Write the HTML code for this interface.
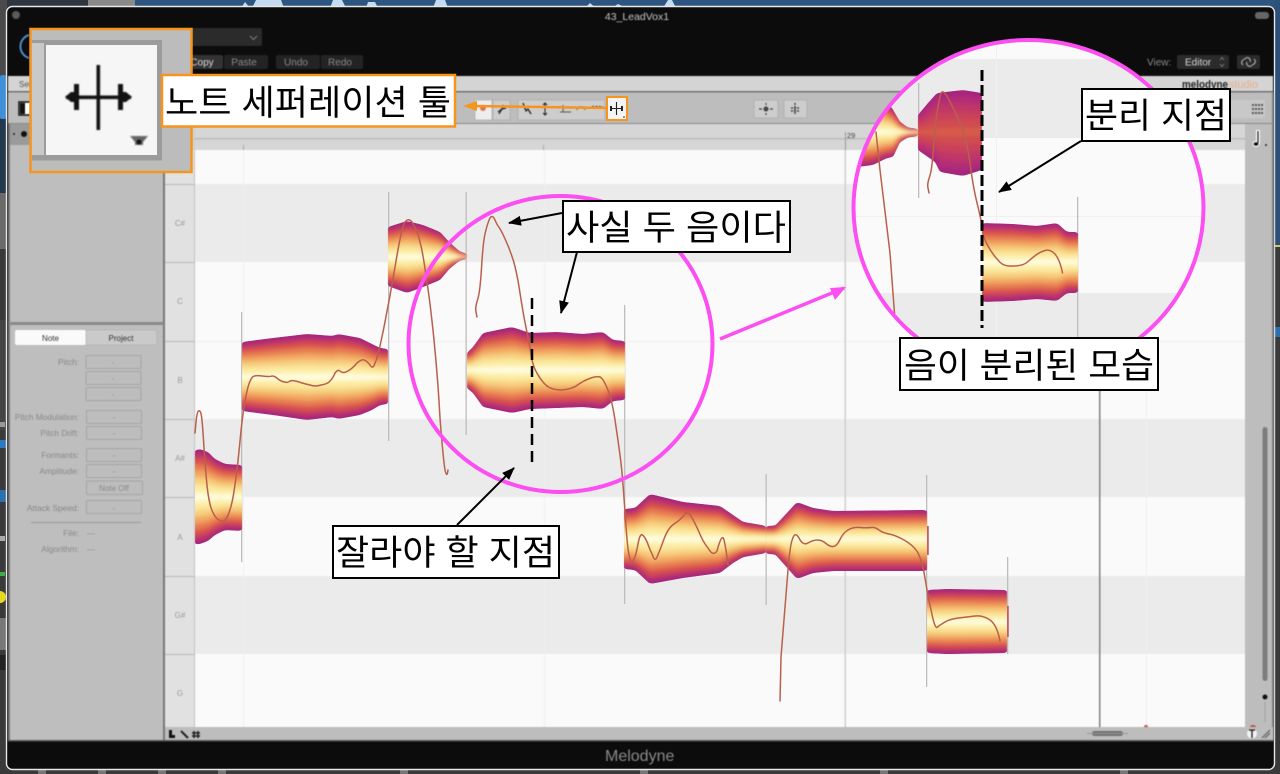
<!DOCTYPE html>
<html lang="ko"><head><meta charset="utf-8"><title>Melodyne</title>
<style>
html,body{margin:0;padding:0;background:#333;width:1280px;height:774px;overflow:hidden}
svg{display:block}
text{font-family:"Liberation Sans","Noto Sans CJK KR",sans-serif}
.k{font-size:35px;fill:#000}
.l{font-size:8.4px;fill:#888;text-anchor:end}
.f{fill:#bdbdbd;stroke:#a5a5a5;stroke-width:1}
.fd{font-size:8px;fill:#8a8a8a;text-anchor:middle}
.pc{fill:none;stroke:#b9604c;stroke-width:1.5;stroke-linejoin:round;stroke-linecap:round}
.btn{font-size:10px;fill:#8a8a8a;text-anchor:middle}
.key{font-size:8px;fill:#999;text-anchor:middle}
.tb{fill:#cdcdcd;stroke:#aaa;stroke-width:.7}
</style></head><body>
<svg width="1280" height="774" viewBox="0 0 1280 774" xmlns="http://www.w3.org/2000/svg">
<defs>
<filter id="by" x="-2%" y="-10%" width="104%" height="120%" color-interpolation-filters="sRGB"><feGaussianBlur stdDeviation="0 1.6"/></filter>
<filter id="sm" x="-6%" y="-15%" width="112%" height="130%" color-interpolation-filters="sRGB"><feGaussianBlur stdDeviation="2.5 1.1"/><feComponentTransfer><feFuncA type="linear" slope="7" intercept="-3"/></feComponentTransfer></filter>
<filter id="soft" x="-5%" y="-5%" width="110%" height="110%" color-interpolation-filters="sRGB"><feGaussianBlur stdDeviation=".45"/></filter>
<filter id="soft2" x="-10%" y="-10%" width="120%" height="120%" color-interpolation-filters="sRGB"><feGaussianBlur stdDeviation=".8"/></filter>
<clipPath id="cc"><ellipse cx="1028.5" cy="208" rx="175" ry="168"/></clipPath>
<marker id="ah" markerWidth="14" markerHeight="12" refX="12" refY="5" orient="auto" markerUnits="userSpaceOnUse"><path d="M0 0L13 5L0 10Z" fill="#000"/></marker>
<path id="b1" d="M195-47L200-48 208-45 215-38 225-33 242-32V34L225 33 215 38 208 44 200 47 195 48Z"/>
<path id="b2" d="M242-35L273-39 307-43 333-41 338-43 360-39 372-33 380-29 388-28V27L380 28 372 33 360 38 338 42 333 40 307 43 273 38 242 34Z"/>
<path id="b3" d="M388-30L407-36 423-32 440-25 450-14 460-5 467-3V2L460 3 450 11 440 23 423 30 407 36 388 29Z"/>
<path id="b4" d="M467-17L473-23 483-37 512-43 530-37 557-38 583-36 603-38 613-30 625-29V30L613 31 603 39 583 37 557 38 530 39 512 43 483 37 473 23 467 18Z"/>
<path id="b5" d="M624-30L635-31 650-45 683-37 720-33 733-24 743-17 766-13V14L743 18 733 24 720 34 683 39 650 45 635 31 624 30Z"/>
<path id="b6" d="M766-13L775-13 797-37 813-31 833-28 927-29V32L833 32 813 34 797 40 775 15 766 15Z"/>
<path id="b7" d="M927-32L947-33 1007-32V31L947 32 927 31Z"/>
<path id="b8" d="M857-35L873-35 885-30 892-24 900-10 908-4 918-3V4L908 5 900 10 893 25 887 26 873 33 857 35Z"/>
<path id="b9" d="M918-17L928-29 937-39 963-42 982-39V38L963 44 940 40 935 30 918 18Z"/>
<path id="b10" d="M982-39L1013-38 1037-36 1057-39 1067-30 1078-30V31L1067 31 1057 39 1037 37 1013 39 982 40Z"/>
</defs>

<!-- desktop behind -->
<rect width="1280" height="774" fill="#3a3a3a"/>
<rect x="135" width="1145" height="8" fill="#2e5580"/>
<rect x="1275" width="5" height="245" fill="#2c5078"/>
<rect x="88" width="47" height="8" fill="#8a8a8a"/>
<rect width="88" height="8" fill="#2f3640"/>
<path d="M241 8L245 2 250 8ZM252 8L256 0 281 0 284 8ZM330 8L333 0 342 0 346 8ZM366 8L368 2 375 2 378 8ZM433 8L436 0 445 0 448 8ZM585 8L590 3 596 8ZM612 8L618 4 626 8ZM663 8L668 0 672 0 676 8Z" fill="#c3dbf0"/>
<rect y="0" width="7" height="75" fill="#4a4a4a"/>
<rect y="75" width="6" height="44" fill="#3f90d8" rx="2"/>
<rect y="119" width="7" height="74" fill="#24384e"/>
<rect y="193" width="7" height="56" fill="#6a6a6a"/>
<rect y="320" width="6" height="110" fill="#444"/>
<rect y="422" width="5" height="5" fill="#999"/>
<rect y="440" width="6" height="8" fill="#2d7ac0"/>
<rect y="490" width="6" height="12" fill="#2d70b0"/>
<rect y="536" width="5" height="5" fill="#aaa"/>
<rect y="572" width="5" height="4" fill="#3fae4a"/>
<circle cx="0" cy="597" r="6" fill="#e8d820"/>
<rect y="618" width="6" height="32" fill="#777"/>
<rect y="655" width="6" height="15" fill="#222"/>
<g fill="#777"><rect x="38" y="770" width="8" height="4"/><rect x="98" y="770" width="8" height="4"/><rect x="158" y="770" width="8" height="4"/><rect x="218" y="770" width="8" height="4"/><rect x="400" y="770" width="8" height="4"/><rect x="640" y="770" width="8" height="4"/><rect x="880" y="770" width="8" height="4"/><rect x="1120" y="770" width="8" height="4"/></g>
<rect x="1275" y="327" width="5" height="10" fill="#2d70b0"/>
<rect x="1275" y="245" width="5" height="2" fill="#d8c860"/>

<!-- window -->
<rect x="6.5" y="6.5" width="1268" height="763" rx="6" fill="#0c0c0c" stroke="#e8e8e8" stroke-width="1.4"/>
<g filter="url(#soft)">
<circle cx="16" cy="15" r="4" fill="#5a5a5a"/>
<rect x="1255" y="12" width="14" height="7" rx="3" fill="#666"/>
<text x="637" y="20" font-size="10.5" fill="#c6c6c6" text-anchor="middle">43_LeadVox1</text>
<path d="M29 35A12 12 0 0 0 29 58" fill="none" stroke="#4a90d0" stroke-width="2"/>
<rect x="190" y="28" width="72" height="18" rx="2" fill="#2b2b2b"/>
<path d="M250 36l3.5 3.5 3.5-3.5" fill="none" stroke="#777" stroke-width="1.2"/>
<rect x="190" y="55" width="33" height="14" rx="2" fill="#333"/>
<rect x="224" y="55" width="44" height="14" rx="2" fill="#232323"/>
<rect x="276" y="55" width="44" height="14" rx="2" fill="#232323"/>
<rect x="321" y="55" width="42" height="14" rx="2" fill="#232323"/>
<text class="btn" x="202" y="65.5" style="fill:#ddd">Copy</text>
<text class="btn" x="244" y="65.5">Paste</text>
<text class="btn" x="296" y="65.5">Undo</text>
<text class="btn" x="340" y="65.5">Redo</text>
<text x="1147" y="65.5" font-size="10" fill="#8a8a8a">View:</text>
<rect x="1177" y="55" width="52" height="14" rx="2" fill="#2b2b2b"/>
<text x="1185" y="65.5" font-size="10" fill="#d8d8d8">Editor</text>
<path d="M1220 60l2-2.5 2 2.5M1220 64l2 2.5 2-2.5" fill="none" stroke="#888" stroke-width=".8"/>
<rect x="1237" y="55" width="23" height="14" rx="2" fill="#2b2b2b"/>
<path d="M1243 65a3 3 0 0 1 0-5l3-2a3 3 0 0 1 4 4M1254 59a3 3 0 0 1 0 5l-3 2a3 3 0 0 1-4-4" fill="none" stroke="#bbb" stroke-width="1"/>

<!-- strip -->
<rect x="8" y="76" width="1265" height="16" fill="#d4d4d4"/>
<text x="19" y="87" font-size="8" fill="#555">Set</text>
<text x="1182" y="88" font-size="11" font-weight="bold" fill="#222" textLength="46" lengthAdjust="spacingAndGlyphs">melodyne</text>
<text x="1229" y="88" font-size="11" fill="#eab08a" textLength="29" lengthAdjust="spacingAndGlyphs">studio</text>

<!-- toolbar -->
<rect x="8" y="91" width="1265" height="33" fill="#bdbdbd"/>
<rect x="8" y="91" width="1265" height="1.5" fill="#707070"/>
<rect x="8" y="123" width="1265" height="1.5" fill="#8a8a8a"/>
<rect x="19" y="102" width="12" height="13" fill="#fff" stroke="#111" stroke-width="1.5"/>
<rect x="20" y="103" width="5" height="11" fill="#111"/>
<rect x="475" y="100" width="17" height="20" fill="#eee" stroke="#aaa" stroke-width=".7"/>
<rect x="493" y="100" width="17" height="20" class="tb"/>
<circle cx="483" cy="108" r="3" fill="#d87850"/>
<path d="M498 112l4-3 1-4M499 114l3-5 4-1" stroke="#222" stroke-width="1.2" fill="none"/>
<rect x="518" y="100" width="87" height="20" class="tb"/>
<path d="M523 103l3 8 2-2 3 5" stroke="#222" stroke-width="1.3" fill="none"/>
<path d="M545 103v12M543 105l2-2 2 2M543 113l2 2 2-2" stroke="#222" stroke-width="1" fill="none"/>
<path d="M560 112h11M563 105v7" stroke="#555" stroke-width="1" fill="none"/>
<path d="M577 110a4 3 0 0 1 8 0" stroke="#555" stroke-width="1" fill="none"/>
<path d="M592 107h11" stroke="#333" stroke-width="2" stroke-dasharray="2 1.5"/>
<rect x="754" y="100" width="24" height="18" rx="1" class="tb"/>
<rect x="784" y="100" width="23" height="18" rx="1" class="tb"/>
<circle cx="766" cy="109" r="2.5" fill="#444"/>
<path d="M759 109h3M770 109h3M766 103v2M766 113v2" stroke="#444" stroke-width="1.2"/>
<path d="M795 103v12M791 108l8 0M791 111l8 0" stroke="#444" stroke-width="1.5" stroke-dasharray="2 1"/>
<rect x="1195" y="100" width="70" height="18" rx="1" fill="#c8c8c8"/>
<path d="M1252 105h11M1252 109h11M1252 113h11" stroke="#555" stroke-width="2" stroke-dasharray="2 1"/>

<!-- left panel -->
<rect x="9" y="124" width="155" height="617" fill="#bebebe"/>
<rect x="9" y="124" width="155" height="21" fill="#b0b0b0"/>
<rect x="9" y="124" width="21" height="21" fill="#9a9a9a"/>
<circle cx="24" cy="134" r="3" fill="#111"/><circle cx="14" cy="134" r="1" fill="#222"/>
<rect x="8" y="124" width="2" height="617" fill="#777"/>
<rect x="163" y="124" width="2" height="617" fill="#777"/>
<rect x="9" y="322" width="155" height="3" fill="#8a8a8a"/>
<rect x="15" y="330" width="71" height="15" rx="2" fill="#fafafa"/>
<rect x="86" y="330" width="71" height="15" rx="2" fill="#cacaca" stroke="#aaa" stroke-width=".6"/>
<text x="50.5" y="341" font-size="8" fill="#333" text-anchor="middle">Note</text>
<text x="121" y="341" font-size="8" fill="#333" text-anchor="middle">Project</text>

<text class="l" x="79" y="365">Pitch:</text>
<rect class="f" x="86" y="355.5" width="55" height="13" rx="1"/><text class="fd" x="113" y="365">-</text>
<rect class="f" x="86" y="371.5" width="55" height="13" rx="1"/><text class="fd" x="113" y="381">-</text>
<rect class="f" x="86" y="387.5" width="55" height="13" rx="1"/><text class="fd" x="113" y="397">-</text>
<text class="l" x="79" y="420">Pitch Modulation:</text>
<rect class="f" x="86.5" y="410.5" width="55" height="13" rx="1"/><text class="fd" x="114" y="420">-</text>
<text class="l" x="79" y="436">Pitch Drift:</text>
<rect class="f" x="86.5" y="426.5" width="55" height="13" rx="1"/><text class="fd" x="114" y="436">-</text>
<text class="l" x="79" y="458">Formants:</text>
<rect class="f" x="86.5" y="448.5" width="55" height="13" rx="1"/><text class="fd" x="114" y="458">-</text>
<text class="l" x="79" y="474">Amplitude:</text>
<rect class="f" x="86.5" y="464.5" width="55" height="13" rx="1"/><text class="fd" x="114" y="474">-</text>
<rect class="f" x="86.5" y="481" width="56" height="13.5" rx="1"/><text class="fd" x="114" y="491">Note Off</text>
<text class="l" x="79" y="511">Attack Speed:</text>
<rect class="f" x="86.5" y="500.5" width="55" height="13" rx="1"/><text class="fd" x="114" y="511">-</text>
<rect x="31" y="522" width="110" height="1" fill="#999"/>
<text class="l" x="79" y="536">File:</text><text x="87" y="536" font-size="8" fill="#8a8a8a">---</text>
<text class="l" x="79" y="552">Algorithm:</text><text x="87" y="552" font-size="8" fill="#8a8a8a">---</text>

<!-- ruler -->
<rect x="165" y="124" width="1082" height="26" fill="#d6d6d6"/>
<rect x="195" y="138" width="1050" height="1.5" fill="#bcbcbc"/>
<rect x="165" y="124" width="30" height="26" fill="#cfcfcf"/>
<text x="847" y="138" font-size="7.5" fill="#444">29</text>
<rect x="243" y="145" width="1" height="5" fill="#aaa"/>
<rect x="543" y="145" width="1" height="5" fill="#aaa"/>
<rect x="845" y="132" width="1" height="18" fill="#999"/>

<!-- keys -->
<rect x="165" y="150" width="30" height="577" fill="#e1e1e1"/>
<g fill="#b8b8b8"><rect x="165" y="184" width="30" height="1"/><rect x="165" y="262" width="30" height="1"/><rect x="165" y="341" width="30" height="1"/><rect x="165" y="419" width="30" height="1"/><rect x="165" y="497" width="30" height="1"/><rect x="165" y="576" width="30" height="1"/><rect x="165" y="654" width="30" height="1"/></g>
<rect x="194" y="150" width="1.5" height="577" fill="#c2c2c2"/>
<text class="key" x="180" y="226">C#</text><text class="key" x="180" y="304">C</text><text class="key" x="180" y="383">B</text><text class="key" x="180" y="461">A#</text><text class="key" x="180" y="540">A</text><text class="key" x="180" y="618">G#</text><text class="key" x="180" y="696">G</text>

<!-- grid -->
<rect x="195" y="150" width="1050" height="577" fill="#fafafa"/>
<g fill="#ebebeb"><rect x="195" y="184" width="1050" height="78"/><rect x="195" y="419" width="1050" height="78"/><rect x="195" y="576" width="1050" height="78"/></g>
<rect x="195" y="341" width="1050" height="1" fill="#efefef"/>
<g fill="#efefef"><rect x="243" y="150" width="1" height="577"/><rect x="544" y="150" width="1" height="577"/><rect x="1146" y="150" width="1" height="577"/></g>
<rect x="844.5" y="150" width="1.5" height="577" fill="#cfcfcf"/>
<rect x="1099" y="390" width="1.5" height="337" fill="#808080"/>

<!-- right scroll -->
<rect x="1245" y="124" width="28" height="617" fill="#bdbdbd"/>
<rect x="1272" y="92" width="2" height="649" fill="#808080"/>
<rect x="1262.5" y="427" width="5" height="254" rx="2.5" fill="#7d7d7d"/>
<circle cx="1265" cy="697" r="2.5" fill="#111"/>
<rect x="1264.5" y="702" width="1" height="20" fill="#a0a0a0"/>
<path d="M1258 130v14" stroke="#fff" stroke-width="4"/>
<ellipse cx="1256" cy="144" rx="3.5" ry="3" fill="#fff"/>
<path d="M1258 131v12" stroke="#111" stroke-width="1.2"/><ellipse cx="1256" cy="144" rx="2.4" ry="1.8" fill="#111"/>
<circle cx="1266" cy="145" r="1" fill="#222"/>

<!-- bottom bar -->
<rect x="165" y="727" width="1108" height="14" fill="#bdbdbd"/>
<rect x="8" y="740" width="1265" height="1.5" fill="#555"/>
<path d="M169 730h3v5h3v3h-6Z" fill="#111"/>
<path d="M181 731l7 7" stroke="#222" stroke-width="2"/>
<path d="M194 731v7M198 731v7M192 733h8M192 736h8" stroke="#222" stroke-width="1.6"/>
<rect x="1092" y="731" width="31" height="5" rx="2.5" fill="#707070"/>
<rect x="1087" y="733" width="41" height="1" fill="#999"/>
<circle cx="1252" cy="733.5" r="5" fill="#f5f5f5"/>
<path d="M1249 730h6M1252 730v8" stroke="#222" stroke-width="1.4"/>
<path d="M1262 738l8-8M1265 738l5-5" stroke="#555" stroke-width="1"/>
<path d="M1144 727a2 2 0 0 1 4 0ZM1250 727a3 2 0 0 1 6 0Z" fill="#c05040"/>
<text x="605" y="761" font-size="16" fill="#8c8c8c">Melodyne</text>
</g>

<!-- note bars -->
<g fill="#bdbdbd">
<rect x="241" y="312" width="1.3" height="250"/><rect x="388" y="192" width="1.3" height="249"/><rect x="465.5" y="192" width="1.3" height="243"/>
<rect x="624" y="305" width="1.3" height="299"/><rect x="765.5" y="474" width="1.3" height="131"/><rect x="926" y="475" width="1.3" height="212"/><rect x="1007" y="557" width="1.3" height="97"/></g>

<!-- blobs -->
<g transform="translate(0,497)"><g filter="url(#sm)"><use href="#b1" fill="#a5267f"/><g filter="url(#by)"><use href="#b1" transform="scale(1,.92)" fill="#c13868"/><use href="#b1" transform="scale(1,.82)" fill="#d6504f"/><use href="#b1" transform="scale(1,.7)" fill="#e77b50"/><use href="#b1" transform="scale(1,.56)" fill="#f1a862"/><use href="#b1" transform="scale(1,.42)" fill="#f7ce7f"/><use href="#b1" transform="scale(1,.28)" fill="#fbe89d"/><use href="#b1" transform="scale(1,.14)" fill="#fdf5bd"/><use href="#b1" transform="scale(1,.04)" fill="#fffef0"/></g></g></g>
<g transform="translate(0,377)"><g filter="url(#sm)"><use href="#b2" fill="#a5267f"/><g filter="url(#by)"><use href="#b2" transform="scale(1,.92)" fill="#c13868"/><use href="#b2" transform="scale(1,.82)" fill="#d6504f"/><use href="#b2" transform="scale(1,.7)" fill="#e77b50"/><use href="#b2" transform="scale(1,.56)" fill="#f1a862"/><use href="#b2" transform="scale(1,.42)" fill="#f7ce7f"/><use href="#b2" transform="scale(1,.28)" fill="#fbe89d"/><use href="#b2" transform="scale(1,.14)" fill="#fdf5bd"/><use href="#b2" transform="scale(1,.04)" fill="#fffef0"/></g></g></g>
<g transform="translate(0,257)"><g filter="url(#sm)"><use href="#b3" fill="#a5267f"/><g filter="url(#by)"><use href="#b3" transform="scale(1,.92)" fill="#c13868"/><use href="#b3" transform="scale(1,.82)" fill="#d6504f"/><use href="#b3" transform="scale(1,.7)" fill="#e77b50"/><use href="#b3" transform="scale(1,.56)" fill="#f1a862"/><use href="#b3" transform="scale(1,.42)" fill="#f7ce7f"/><use href="#b3" transform="scale(1,.28)" fill="#fbe89d"/><use href="#b3" transform="scale(1,.14)" fill="#fdf5bd"/><use href="#b3" transform="scale(1,.04)" fill="#fffef0"/></g></g></g>
<g transform="translate(0,370)"><g filter="url(#sm)"><use href="#b4" fill="#a5267f"/><g filter="url(#by)"><use href="#b4" transform="scale(1,.92)" fill="#c13868"/><use href="#b4" transform="scale(1,.82)" fill="#d6504f"/><use href="#b4" transform="scale(1,.7)" fill="#e77b50"/><use href="#b4" transform="scale(1,.56)" fill="#f1a862"/><use href="#b4" transform="scale(1,.42)" fill="#f7ce7f"/><use href="#b4" transform="scale(1,.28)" fill="#fbe89d"/><use href="#b4" transform="scale(1,.14)" fill="#fdf5bd"/><use href="#b4" transform="scale(1,.04)" fill="#fffef0"/></g></g></g>
<g transform="translate(0,539)"><g filter="url(#sm)"><use href="#b5" fill="#a5267f"/><g filter="url(#by)"><use href="#b5" transform="scale(1,.92)" fill="#c13868"/><use href="#b5" transform="scale(1,.82)" fill="#d6504f"/><use href="#b5" transform="scale(1,.7)" fill="#e77b50"/><use href="#b5" transform="scale(1,.56)" fill="#f1a862"/><use href="#b5" transform="scale(1,.42)" fill="#f7ce7f"/><use href="#b5" transform="scale(1,.28)" fill="#fbe89d"/><use href="#b5" transform="scale(1,.14)" fill="#fdf5bd"/><use href="#b5" transform="scale(1,.04)" fill="#fffef0"/></g></g></g>
<g transform="translate(0,539)"><g filter="url(#sm)"><use href="#b6" fill="#a5267f"/><g filter="url(#by)"><use href="#b6" transform="scale(1,.92)" fill="#c13868"/><use href="#b6" transform="scale(1,.82)" fill="#d6504f"/><use href="#b6" transform="scale(1,.7)" fill="#e77b50"/><use href="#b6" transform="scale(1,.56)" fill="#f1a862"/><use href="#b6" transform="scale(1,.42)" fill="#f7ce7f"/><use href="#b6" transform="scale(1,.28)" fill="#fbe89d"/><use href="#b6" transform="scale(1,.14)" fill="#fdf5bd"/><use href="#b6" transform="scale(1,.04)" fill="#fffef0"/></g></g></g>
<g transform="translate(0,622)"><g filter="url(#sm)"><use href="#b7" fill="#a5267f"/><g filter="url(#by)"><use href="#b7" transform="scale(1,.92)" fill="#c13868"/><use href="#b7" transform="scale(1,.82)" fill="#d6504f"/><use href="#b7" transform="scale(1,.7)" fill="#e77b50"/><use href="#b7" transform="scale(1,.56)" fill="#f1a862"/><use href="#b7" transform="scale(1,.42)" fill="#f7ce7f"/><use href="#b7" transform="scale(1,.28)" fill="#fbe89d"/><use href="#b7" transform="scale(1,.14)" fill="#fdf5bd"/><use href="#b7" transform="scale(1,.04)" fill="#fffef0"/></g></g></g>
<rect x="927" y="526" width="1.8" height="29" fill="#c85a6a"/>
<rect x="1007" y="606" width="1.8" height="31" fill="#c85a6a"/>

<!-- pitch curves -->
<path class="pc" d="M195,433 L196,422 Q197,412 198.5,411 200,410 201,413.5 202,417 203.5,440 205,463 206.5,480 208,497 210.5,506 213,515 217.5,519 222,523 225,520 228,517 230.5,508 233,500 235.5,481 238,463 240,441 242,420 244,407 246,395 248,387 250,380 252.5,377 255,375 262,376 270,377 272,376 275,376 278,379 282,382 285,382 288,383 290,381 293,380 299,382 305,384 310,385 315,387 321,385 328,384 330,381 333,378 335,373 338,369 340,371 343,374 348,371 353,368 357,363 362,359 364,360 367,361 370,365 373,370 375,363 378,357 384,327 390,297 395,267 400,237 403,226 407,216 412,222 418,232 420,242 423,253 426,276 430,300 434,340 438,380 440,418 443,457 445,470 447,479 448,470"/>
<path class="pc" d="M477,317 L476,312 Q475,308 477.5,300 480,293 481.5,268 483,243 485,234 487,225 489.5,219 492,214 494.5,219 497,225 499.5,228 502,232 506,241 510,250 513.5,261 517,273 520,293 523,313 526.5,330 530,347 531.5,357 533,367 537.5,374 542,382 547,386 552,390 562,390 573,389 579,384 585,380 591,378 597,376 600,377 603,378 607.5,389 612,400 615,420 618,440 620,455 622,470 623.5,491 625,513 626.5,533 628,553 630,559 632,565 634,559 636,555 638,544 640,533 642.5,535 645,537 647.5,543 650,550 652.5,555 655,563 657.5,556 660,550 664,539 668,528 674,524 680,520 683.5,516 687,510 691,516 695,523 699,532 703,542 708,548 713,557 717,551 722,532 724,540 726,548 728,565 730,583 L739,727"/>
<path class="pc" d="M780,701 L781,657 L788,570 Q790,545 792.5,539 795,531 799,538 803,546 808,543 813,540 817.5,540 822,540 826,543.5 830,547 833.5,546.5 837,546 840,539.5 843,533 848,530 853,527 860,527.5 867,528 871,527.5 875,527 879,530 883,533 889,534 895,535 904,540 913,545 917.5,552 922,560 925,578 928,597 931.5,612 935,630 937.5,627 940,625 945,622 950,619 958.5,618 967,617 975,616 983,615 990,620 997,625 1000,641 1003,657 L1009,727"/>

<!-- left circle + annotations -->
<ellipse cx="560.5" cy="344" rx="152" ry="148" fill="none" stroke="#fb4ff2" stroke-width="4"/>
<line x1="532" y1="298" x2="532" y2="467" stroke="#000" stroke-width="2.5" stroke-dasharray="11 6"/>

<!-- right circle -->
<g clip-path="url(#cc)">
<ellipse cx="1028.5" cy="208" rx="175" ry="168" fill="#fafafa"/>
<rect x="850" y="59" width="360" height="79" fill="#ebebeb"/>
<rect x="850" y="293" width="360" height="47" fill="#ebebeb"/>
<rect x="850" y="216" width="360" height="1" fill="#f0f0f0"/>
<rect x="996" y="40" width="1" height="300" fill="#f0f0f0"/>
<rect x="918" y="83" width="1.3" height="115" fill="#bdbdbd"/>
<rect x="1077" y="197" width="1.3" height="140" fill="#bdbdbd"/>
<g transform="translate(0,132)"><g filter="url(#sm)"><use href="#b8" fill="#a5267f"/><g filter="url(#by)"><use href="#b8" transform="scale(1,.92)" fill="#c13868"/><use href="#b8" transform="scale(1,.82)" fill="#d6504f"/><use href="#b8" transform="scale(1,.7)" fill="#e77b50"/><use href="#b8" transform="scale(1,.56)" fill="#f1a862"/><use href="#b8" transform="scale(1,.42)" fill="#f7ce7f"/><use href="#b8" transform="scale(1,.28)" fill="#fbe89d"/><use href="#b8" transform="scale(1,.14)" fill="#fdf5bd"/><use href="#b8" transform="scale(1,.04)" fill="#fffef0"/></g></g></g>
<g transform="translate(0,132)"><g filter="url(#sm)"><use href="#b9" fill="#a5267f"/><g filter="url(#by)"><use href="#b9" transform="scale(1,.88)" fill="#b32c78"/><use href="#b9" transform="scale(1,.7)" fill="#bf3669"/><use href="#b9" transform="scale(1,.5)" fill="#c9415b"/><use href="#b9" transform="scale(1,.3)" fill="#d04c50"/><use href="#b9" transform="scale(1,.1)" fill="#d65c4a"/></g></g></g>
<g transform="translate(0,262)"><g filter="url(#sm)"><use href="#b10" fill="#a5267f"/><g filter="url(#by)"><use href="#b10" transform="scale(1,.92)" fill="#c13868"/><use href="#b10" transform="scale(1,.82)" fill="#d6504f"/><use href="#b10" transform="scale(1,.7)" fill="#e77b50"/><use href="#b10" transform="scale(1,.56)" fill="#f1a862"/><use href="#b10" transform="scale(1,.42)" fill="#f7ce7f"/><use href="#b10" transform="scale(1,.28)" fill="#fbe89d"/><use href="#b10" transform="scale(1,.14)" fill="#fdf5bd"/><use href="#b10" transform="scale(1,.04)" fill="#fffef0"/></g></g></g>
<polyline class="pc" points="876,132 880,170 890,253 895,320 897,340"/>
<path class="pc" d="M929,193 L928,188 Q927,184 929.5,177 932,170 933.5,148 935,127 937,113 939,100 940.5,95 942,88 947.5,97 953,107 960,123 967,140 970,163 973,187 977.5,205 982,223 982.5,230 983,237 988,246 993,255 998,260 1003,267 1013,266 1023,266 1027.5,262 1032,258 1036,255 1040,252 1045,250.5 1050,249 1055,254 1060,260 1062.5,273 1065,287 L1072,337"/>
<line x1="982" y1="70" x2="982" y2="328" stroke="#000" stroke-width="3" stroke-dasharray="11 4"/>
</g>
<ellipse cx="1028.5" cy="208" rx="175" ry="168" fill="none" stroke="#fb4ff2" stroke-width="4"/>

<line x1="720" y1="339" x2="844" y2="288" stroke="#fb4ff2" stroke-width="3.5"/>
<path d="M846 287L830 288 835 300Z" fill="#fb4ff2"/>

<!-- arrows -->
<g stroke="#000" stroke-width="2" fill="none">
<line x1="562" y1="213" x2="509" y2="223" marker-end="url(#ah)"/>
<line x1="577" y1="252" x2="561" y2="313" marker-end="url(#ah)"/>
<line x1="457" y1="525" x2="514" y2="468" marker-end="url(#ah)"/>
<line x1="1081" y1="141" x2="999" y2="192" marker-end="url(#ah)"/>
</g>

<!-- labels -->
<rect x="563" y="201" width="227" height="51" fill="#fff" stroke="#000" stroke-width="2"/>
<text class="k" x="566" y="240" textLength="220" lengthAdjust="spacingAndGlyphs">사실 두 음이다</text>
<rect x="333" y="526" width="226" height="52" fill="#fff" stroke="#000" stroke-width="2"/>
<text class="k" x="336" y="565" textLength="219" lengthAdjust="spacingAndGlyphs">잘라야 할 지점</text>
<rect x="1082" y="89" width="148" height="52" fill="#fff" stroke="#000" stroke-width="2"/>
<text class="k" x="1085" y="128" textLength="142" lengthAdjust="spacingAndGlyphs">분리 지점</text>
<rect x="900" y="338" width="258" height="52" fill="#fff" stroke="#000" stroke-width="2"/>
<text class="k" x="904" y="378" textLength="250" lengthAdjust="spacingAndGlyphs">음이 분리된 모습</text>

<!-- thumbnail -->
<rect x="30.5" y="29" width="161" height="143" fill="#bcbcbc" stroke="#f7941d" stroke-width="2.5"/>
<rect x="32" y="40" width="130" height="120.5" fill="#9c9c9c"/>
<rect x="32" y="43" width="12" height="112" fill="#c9c9c9"/>
<rect x="46" y="45" width="111" height="110" fill="#f6f6f6"/>
<g filter="url(#soft2)">
<rect x="96.5" y="65" width="3.6" height="65" fill="#111"/>
<rect x="66" y="95.5" width="65" height="3.6" fill="#111"/>
<path d="M65 97l6-5h3v-8h5v26h-5v-8h-3Z" fill="#111"/>
<path d="M132 97l-6-5h-3v-8h-5v26h5v-8h3Z" fill="#111"/>
<path d="M130 136h18l-5 6v3h-8v-3Z" fill="#666"/><circle cx="139" cy="142" r="2.5" fill="#111"/>
</g>

<rect x="162" y="75" width="293" height="51.5" fill="#fff" stroke="#f7941d" stroke-width="2.5"/>
<text class="k" x="165" y="115" textLength="286" lengthAdjust="spacingAndGlyphs">노트 세퍼레이션 툴</text>
<line x1="606" y1="108" x2="475" y2="106" stroke="#f7941d" stroke-width="2.5"/>
<path d="M463 106l14-5v10Z" fill="#f7941d"/>
<rect x="607" y="97" width="20" height="23" fill="#f4f4f4" stroke="#f7941d" stroke-width="2"/>
<path d="M616.5 102v13M610 108.5h13" stroke="#222" stroke-width="1.1"/>
<path d="M611 106v5M622 106v5" stroke="#222" stroke-width="2"/>
<circle cx="624" cy="117" r=".8" fill="#222"/>
</svg>
</body></html>
